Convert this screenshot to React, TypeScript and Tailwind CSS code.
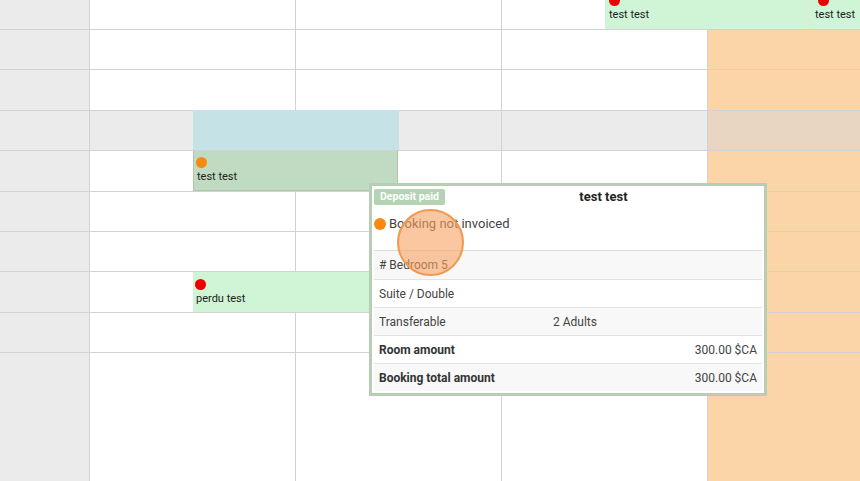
import React from "react";

const line = "border-[#d2d2d2]";

const rows = [
  { h: "h-[30px]", gray: false, orange: false },
  { h: "h-[40.4px]", gray: false, orange: true },
  { h: "h-[40.4px]", gray: false, orange: true },
  { h: "h-[40.4px]", gray: true, orange: true },
  { h: "h-[40.4px]", gray: false, orange: true },
  { h: "h-[40.4px]", gray: false, orange: true },
  { h: "h-[40.4px]", gray: false, orange: true },
  { h: "h-[40.4px]", gray: false, orange: true },
  { h: "h-[40.4px]", gray: false, orange: true },
];

const GridRow = ({ h, gray, orange }: { h: string; gray: boolean; orange: boolean }) => (
  <div className={`flex ${h} border-b ${line}`}>
    <div className={`w-[90px] shrink-0 border-r ${line} bg-[#ebebeb]`} />
    <div className={`w-[206px] shrink-0 border-r ${line} ${gray ? "bg-[#ebebeb]" : "bg-white"}`} />
    <div className={`w-[206px] shrink-0 border-r ${line} ${gray ? "bg-[#ebebeb]" : "bg-white"}`} />
    <div className={`w-[206px] shrink-0 border-r ${line} ${gray ? "bg-[#ebebeb]" : "bg-white"}`} />
    <div
      className={`flex-1 ${
        orange ? (gray ? "bg-[#e8d6c3]" : "bg-[#fbd4a7]") : "bg-white"
      }`}
    />
  </div>
);

const Dot = ({ color }: { color: string }) => (
  <span className={`block w-[11px] h-[11px] rounded-full ${color}`} />
);

const tableRows = [
  { label: "# Bedroom 5", mid: "", value: "", bold: false },
  { label: "Suite / Double", mid: "", value: "", bold: false },
  { label: "Transferable", mid: "2 Adults", value: "", bold: false },
  { label: "Room amount", mid: "", value: "300.00 $CA", bold: true },
  { label: "Booking total amount", mid: "", value: "300.00 $CA", bold: true },
];

export default function App() {
  return (
    <div
      className="relative w-[860px] h-[481px] overflow-hidden bg-white"
      style={{ fontFamily: "Roboto, 'Liberation Sans', sans-serif" }}
    >
      {/* calendar grid */}
      <div className="flex flex-col h-full">
        {rows.map((r, i) => (
          <GridRow key={i} {...r} />
        ))}
        <div className="flex flex-1">
          <div className={`w-[90px] shrink-0 border-r ${line} bg-[#ebebeb]`} />
          <div className={`w-[206px] shrink-0 border-r ${line}`} />
          <div className={`w-[206px] shrink-0 border-r ${line}`} />
          <div className={`w-[206px] shrink-0 border-r ${line}`} />
          <div className="flex-1 bg-[#fbd4a7]" />
        </div>
      </div>

      {/* bookings */}
      <div className="absolute left-[605px] top-0 w-[205px] h-[29px] bg-[#cff5d6] border-r border-[#e4e8d2] pl-[4px] text-[11px] text-[#222]">
        <div className="-mt-[5px]">
          <Dot color="bg-[#ee0000]" />
        </div>
        <div className="leading-[14px] mt-[2px]">test test</div>
      </div>
      <div className="absolute left-[810px] top-0 w-[60px] h-[29px] bg-[#cff5d6] pl-[5px] text-[11px] text-[#222]">
        <div className="-mt-[5px] pl-[3px]">
          <Dot color="bg-[#ee0000]" />
        </div>
        <div className="leading-[14px] mt-[2px]">test test</div>
      </div>

      <div className="absolute left-[193px] top-[110px] w-[206px] h-[40px] bg-[#c5e2e6]" />

      <div className="absolute left-[193px] top-[151px] w-[205px] h-[40px] bg-[#c0dbc1] border border-t-0 border-[#afc9b0] pl-[2px] pt-[6px] text-[11px] text-[#222]">
        <Dot color="bg-[#f68a12]" />
        <div className="leading-[14px] mt-[2px] pl-[1px]">test test</div>
      </div>

      <div className="absolute left-[193px] top-[272px] w-[206px] h-[40px] bg-[#cff5d6] pl-[2px] pt-[7px] text-[11px] text-[#222]">
        <Dot color="bg-[#ee0000]" />
        <div className="leading-[14px] mt-[2px] pl-[1px]">perdu test</div>
      </div>

      {/* popup */}
      <div className="absolute left-[369px] top-[183px] w-[398px] h-[213px] border-[3px] border-[#b6cfb4] bg-white px-[2px] pt-[3px] text-[#333]">
        <div className="flex items-start">
          <span className="px-[6px] h-[16px] leading-[15px] rounded-[2px] bg-[#b4d3b5] text-white text-[10.5px] font-bold">
            Deposit paid
          </span>
          <div className="flex-1 text-center text-[13px] font-bold leading-[16px] text-[#222]">
            test test
          </div>
        </div>
        <div className="flex items-center gap-[3px] mt-[11px] h-[16px]">
          <span className="block w-[12px] h-[12px] rounded-full bg-[#f68a12]" />
          <span className="text-[13px] text-[#444]">Booking not invoiced</span>
        </div>
        <div className="mt-[18px] border-t border-[#dcdcdc]">
          {tableRows.map((r, i) => (
            <div
              key={i}
              className={`flex items-center h-[28px] px-[5px] text-[12px] ${
                i > 0 ? "border-t border-[#e2e2e2]" : ""
              } ${i % 2 === 0 ? "bg-[#f8f8f8]" : "bg-white"} ${
                r.bold ? "font-bold text-[#333]" : "text-[#444]"
              }`}
            >
              <span className="w-[174px]">{r.label}</span>
              <span className="flex-1 font-normal">{r.mid}</span>
              <span className="font-normal text-[#444]">{r.value}</span>
            </div>
          ))}
        </div>
      </div>

      {/* cursor highlight */}
      <div className="absolute left-[397px] top-[209px] w-[67px] h-[67px] rounded-full border-2 border-[#ef9a4e] bg-[#f9a261]/60" />
    </div>
  );
}
